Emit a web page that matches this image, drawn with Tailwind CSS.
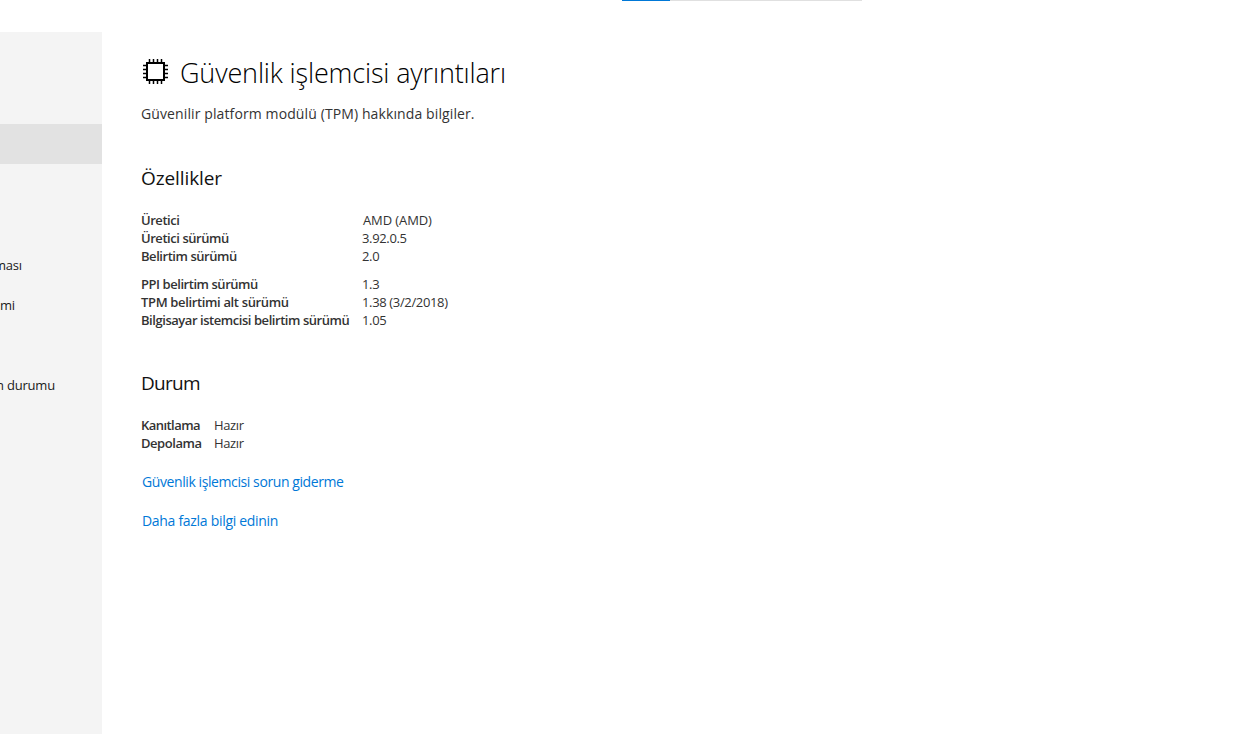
<!doctype html>
<html lang="tr">
  <head>
    <meta charset="UTF-8" />
    <title>Güvenlik işlemcisi ayrıntıları</title>
    <script src="https://cdn.jsdelivr.net/npm/@tailwindcss/browser@4"></script>
  </head>
  <body class="h-[734px] w-[1249px] overflow-hidden bg-white font-['Open_Sans','Noto_Sans',sans-serif]">
    <div class="flex h-[32px] items-start pl-[622px]">
      <div class="h-[1px] w-[48px] bg-[#0078d7]"></div>
      <div class="h-[1px] w-[192px] bg-[#e0e0e0]"></div>
    </div>
    <div class="flex h-[702px]">
      <nav class="w-[102px] shrink-0 overflow-hidden bg-[#f4f4f4] pt-[92px] text-[13px] tracking-[-0.2px] text-[#1a1a1a]">
        <div class="h-[40px] bg-[#e2e2e2]"></div>
        <div class="h-[40px]"></div>
        <div class="h-[40px]"></div>
        <div class="flex h-[40px] items-center pt-[3px] -ml-[6px]">ması</div>
        <div class="flex h-[40px] items-center pt-[3px]">mi</div>
        <div class="h-[40px]"></div>
        <div class="flex h-[40px] items-center pt-[3px] -ml-[4px]">n durumu</div>
      </nav>
      <main class="flex-1 pl-[39px] pt-[21px] text-[13px] tracking-[-0.35px] text-[#333]">
        <div class="flex h-[40px] items-center">
          <svg class="ml-[2px] mr-[12px] -mt-[3px] h-[25px] w-[25px] shrink-0" viewBox="0 0 25 25" fill="none" stroke="#000">
            <rect x="4" y="4" width="17" height="17" stroke-width="2" />
            <path d="M6.5 0v3M10.5 0v3M14.5 0v3M18.5 0v3M6.5 22v3M10.5 22v3M14.5 22v3M18.5 22v3M0 6.5h3M0 10.5h3M0 14.5h3M0 18.5h3M22 6.5h3M22 10.5h3M22 14.5h3M22 18.5h3" stroke-width="1.5" />
          </svg>
          <h1 class="text-[27px] font-light tracking-[-0.15px] text-black">Güvenlik işlemcisi ayrıntıları</h1>
        </div>
        <p class="mt-[10px] flex h-[20px] items-center text-[14px] tracking-[0.11px]">Güvenilir platform modülü (TPM) hakkında bilgiler.</p>

        <h2 class="mt-[41px] flex h-[28px] items-center text-[19px] tracking-[-0.1px] text-[#111]">Özellikler</h2>
        <div class="mt-[20px] grid grid-cols-[221px_auto] justify-start auto-rows-[18px] items-center">
          <span class="font-semibold tracking-[-0.45px]">Üretici</span><span class="ml-[1px] tracking-[-0.1px]">AMD (AMD)</span>
          <span class="font-semibold tracking-[-0.45px]">Üretici sürümü</span><span>3.92.0.5</span>
          <span class="font-semibold tracking-[-0.45px]">Belirtim sürümü</span><span>2.0</span>
        </div>
        <div class="mt-[10px] grid grid-cols-[221px_auto] justify-start auto-rows-[18px] items-center">
          <span class="font-semibold tracking-[-0.45px]">PPI belirtim sürümü</span><span>1.3</span>
          <span class="font-semibold tracking-[-0.35px]">TPM belirtimi alt sürümü</span><span>1.38 (3/2/2018)</span>
          <span class="whitespace-nowrap font-semibold tracking-[-0.45px]">Bilgisayar istemcisi belirtim sürümü</span><span>1.05</span>
        </div>

        <h2 class="mt-[39px] flex h-[28px] items-center text-[19px] tracking-[-0.7px] text-[#111]">Durum</h2>
        <div class="mt-[20px] grid grid-cols-[73px_auto] justify-start auto-rows-[18px] items-center">
          <span class="font-semibold tracking-[-0.55px]">Kanıtlama</span><span>Hazır</span>
          <span class="font-semibold tracking-[-0.45px]">Depolama</span><span>Hazır</span>
        </div>

        <a class="mt-[18px] ml-[1px] flex h-[20px] items-center text-[14px] tracking-[-0.41px] text-[#0078d7]">Güvenlik işlemcisi sorun giderme</a>
        <a class="mt-[19px] ml-[1px] flex h-[20px] items-center text-[14px] tracking-[-0.3px] text-[#0078d7]">Daha fazla bilgi edinin</a>
      </main>
    </div>
  </body>
</html>
